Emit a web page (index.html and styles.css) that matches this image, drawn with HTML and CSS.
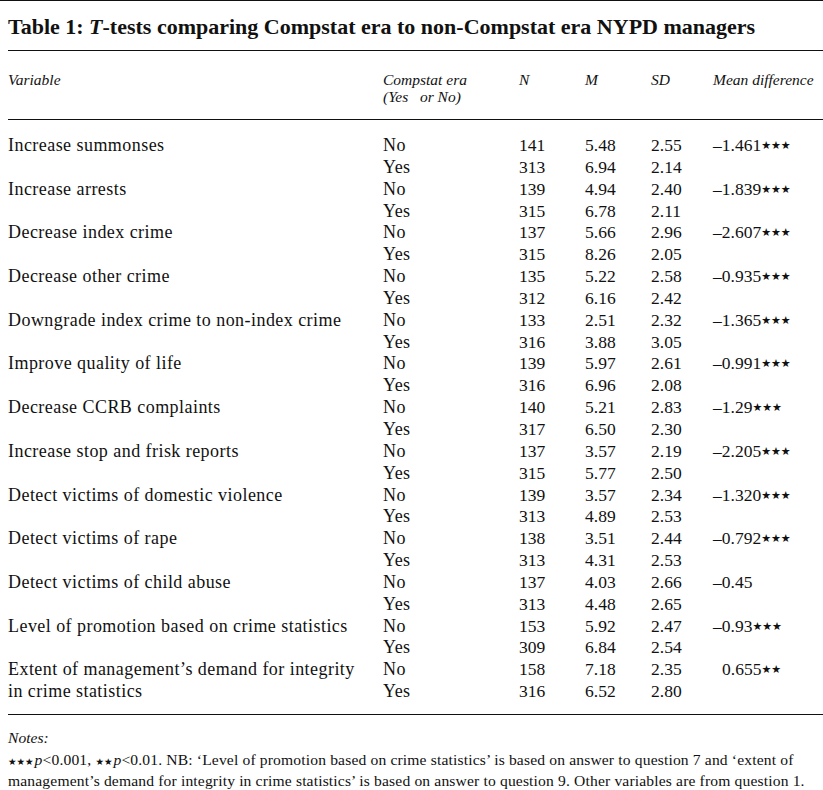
FILE: index.html
```html
<!DOCTYPE html>
<html lang="en">
<head>
<meta charset="utf-8">
<title>Table 1</title>
<link rel="stylesheet" href="styles.css">
</head>
<body>
<div class="topline"></div>
<div class="page">
  <h1 class="title">Table 1: <i>T</i>-tests comparing Compstat era to non-Compstat era NYPD managers</h1>
  <table class="data">
    <colgroup>
      <col class="c-var"><col class="c-era"><col class="c-n"><col class="c-m"><col class="c-sd"><col class="c-diff">
    </colgroup>
    <thead>
      <tr>
        <th>Variable</th>
        <th>Compstat era<br>(Yes&nbsp;&nbsp; or No)</th>
        <th>N</th>
        <th>M</th>
        <th>SD</th>
        <th>Mean difference</th>
      </tr>
    </thead>
    <tbody>
      <tr class="first"><td class="name">Increase summonses</td><td class="name">No</td><td>141</td><td>5.48</td><td>2.55</td><td>–1.461<span class="st">★★★</span></td></tr>
      <tr><td class="name"></td><td class="name">Yes</td><td>313</td><td>6.94</td><td>2.14</td><td></td></tr>
      <tr><td class="name">Increase arrests</td><td class="name">No</td><td>139</td><td>4.94</td><td>2.40</td><td>–1.839<span class="st">★★★</span></td></tr>
      <tr><td class="name"></td><td class="name">Yes</td><td>315</td><td>6.78</td><td>2.11</td><td></td></tr>
      <tr><td class="name">Decrease index crime</td><td class="name">No</td><td>137</td><td>5.66</td><td>2.96</td><td>–2.607<span class="st">★★★</span></td></tr>
      <tr><td class="name"></td><td class="name">Yes</td><td>315</td><td>8.26</td><td>2.05</td><td></td></tr>
      <tr><td class="name">Decrease other crime</td><td class="name">No</td><td>135</td><td>5.22</td><td>2.58</td><td>–0.935<span class="st">★★★</span></td></tr>
      <tr><td class="name"></td><td class="name">Yes</td><td>312</td><td>6.16</td><td>2.42</td><td></td></tr>
      <tr><td class="name">Downgrade index crime to non-index crime</td><td class="name">No</td><td>133</td><td>2.51</td><td>2.32</td><td>–1.365<span class="st">★★★</span></td></tr>
      <tr><td class="name"></td><td class="name">Yes</td><td>316</td><td>3.88</td><td>3.05</td><td></td></tr>
      <tr><td class="name">Improve quality of life</td><td class="name">No</td><td>139</td><td>5.97</td><td>2.61</td><td>–0.991<span class="st">★★★</span></td></tr>
      <tr><td class="name"></td><td class="name">Yes</td><td>316</td><td>6.96</td><td>2.08</td><td></td></tr>
      <tr><td class="name">Decrease CCRB complaints</td><td class="name">No</td><td>140</td><td>5.21</td><td>2.83</td><td>–1.29<span class="st">★★★</span></td></tr>
      <tr><td class="name"></td><td class="name">Yes</td><td>317</td><td>6.50</td><td>2.30</td><td></td></tr>
      <tr><td class="name">Increase stop and frisk reports</td><td class="name">No</td><td>137</td><td>3.57</td><td>2.19</td><td>–2.205<span class="st">★★★</span></td></tr>
      <tr><td class="name"></td><td class="name">Yes</td><td>315</td><td>5.77</td><td>2.50</td><td></td></tr>
      <tr><td class="name">Detect victims of domestic violence</td><td class="name">No</td><td>139</td><td>3.57</td><td>2.34</td><td>–1.320<span class="st">★★★</span></td></tr>
      <tr><td class="name"></td><td class="name">Yes</td><td>313</td><td>4.89</td><td>2.53</td><td></td></tr>
      <tr><td class="name">Detect victims of rape</td><td class="name">No</td><td>138</td><td>3.51</td><td>2.44</td><td>–0.792<span class="st">★★★</span></td></tr>
      <tr><td class="name"></td><td class="name">Yes</td><td>313</td><td>4.31</td><td>2.53</td><td></td></tr>
      <tr><td class="name">Detect victims of child abuse</td><td class="name">No</td><td>137</td><td>4.03</td><td>2.66</td><td>–0.45</td></tr>
      <tr><td class="name"></td><td class="name">Yes</td><td>313</td><td>4.48</td><td>2.65</td><td></td></tr>
      <tr><td class="name">Level of promotion based on crime statistics</td><td class="name">No</td><td>153</td><td>5.92</td><td>2.47</td><td>–0.93<span class="st">★★★</span></td></tr>
      <tr><td class="name"></td><td class="name">Yes</td><td>309</td><td>6.84</td><td>2.54</td><td></td></tr>
      <tr><td class="name">Extent of management’s demand for integrity</td><td class="name">No</td><td>158</td><td>7.18</td><td>2.35</td><td><span class="pos">0.655<span class="st">★★</span></span></td></tr>
      <tr class="last"><td class="name">in crime statistics</td><td class="name">Yes</td><td>316</td><td>6.52</td><td>2.80</td><td></td></tr>
    </tbody>
  </table>
  <div class="notes">
    <p class="notes-head">Notes:</p>
    <p class="notes-text"><span class="st-n">★★★</span><i>p</i>&lt;0.001, <span class="st-n">★★</span><i>p</i>&lt;0.01. NB: ‘Level of promotion based on crime statistics’ is based on answer to question 7 and ‘extent of management’s demand for integrity in crime statistics’ is based on answer to question 9. Other variables are from question 1.</p>
  </div>
</div>
</body>
</html>
```

FILE: styles.css
```css
html, body {
  margin: 0;
  padding: 0;
  background: #ffffff;
}

body {
  font-family: "Liberation Serif", "Times New Roman", serif;
  color: #111111;
  width: 823px;
  overflow: hidden;
}

.topline {
  height: 1px;
  background: #111;
}

.page {
  padding-left: 8px;
}

.title {
  margin: 0;
  padding-top: 13px;
  font-size: 22px;
  line-height: 25px;
  font-weight: bold;
  border-bottom: 1.5px solid #111;
  padding-bottom: 11px;
  white-space: nowrap;
}

.title i {
  font-style: italic;
}

.data {
  border-collapse: collapse;
  table-layout: fixed;
  width: 815px;
}

.c-var { width: 375px; }
.c-era { width: 136px; }
.c-n { width: 66px; }
.c-m { width: 66px; }
.c-sd { width: 62px; }
.c-diff { width: 110px; }

.data th {
  font-style: italic;
  font-weight: normal;
  font-size: 15.5px;
  line-height: 17px;
  text-align: left;
  vertical-align: top;
  padding: 20px 0 14px 0;
  border-bottom: 1.5px solid #111;
  white-space: nowrap;
}

.data td {
  font-size: 17.5px;
  line-height: 21.84px;
  height: 21.84px;
  padding: 0;
  text-align: left;
  vertical-align: middle;
  white-space: nowrap;
}

.data td.name {
  font-size: 18px;
  letter-spacing: 0.45px;
}

.data tr.first td {
  padding-top: 15px;
}

.data tr.last td {
  padding-bottom: 11px;
  border-bottom: 1.5px solid #111;
}

.st {
  font-size: 11px;
  vertical-align: 2px;
  font-family: "DejaVu Sans", sans-serif;
}

.pos {
  padding-left: 9px;
}

.notes {
  padding-top: 12px;
}

.notes p {
  margin: 0;
}

.notes-head {
  font-style: italic;
  font-size: 15.6px;
  line-height: 22px;
}

.notes-text {
  font-size: 15.6px;
  line-height: 21.5px;
  letter-spacing: 0.15px;
}

.st-n {
  font-size: 9.5px;
  line-height: 1;
  letter-spacing: 0;
  margin-right: 1px;
  font-family: "DejaVu Sans", sans-serif;
}
```
